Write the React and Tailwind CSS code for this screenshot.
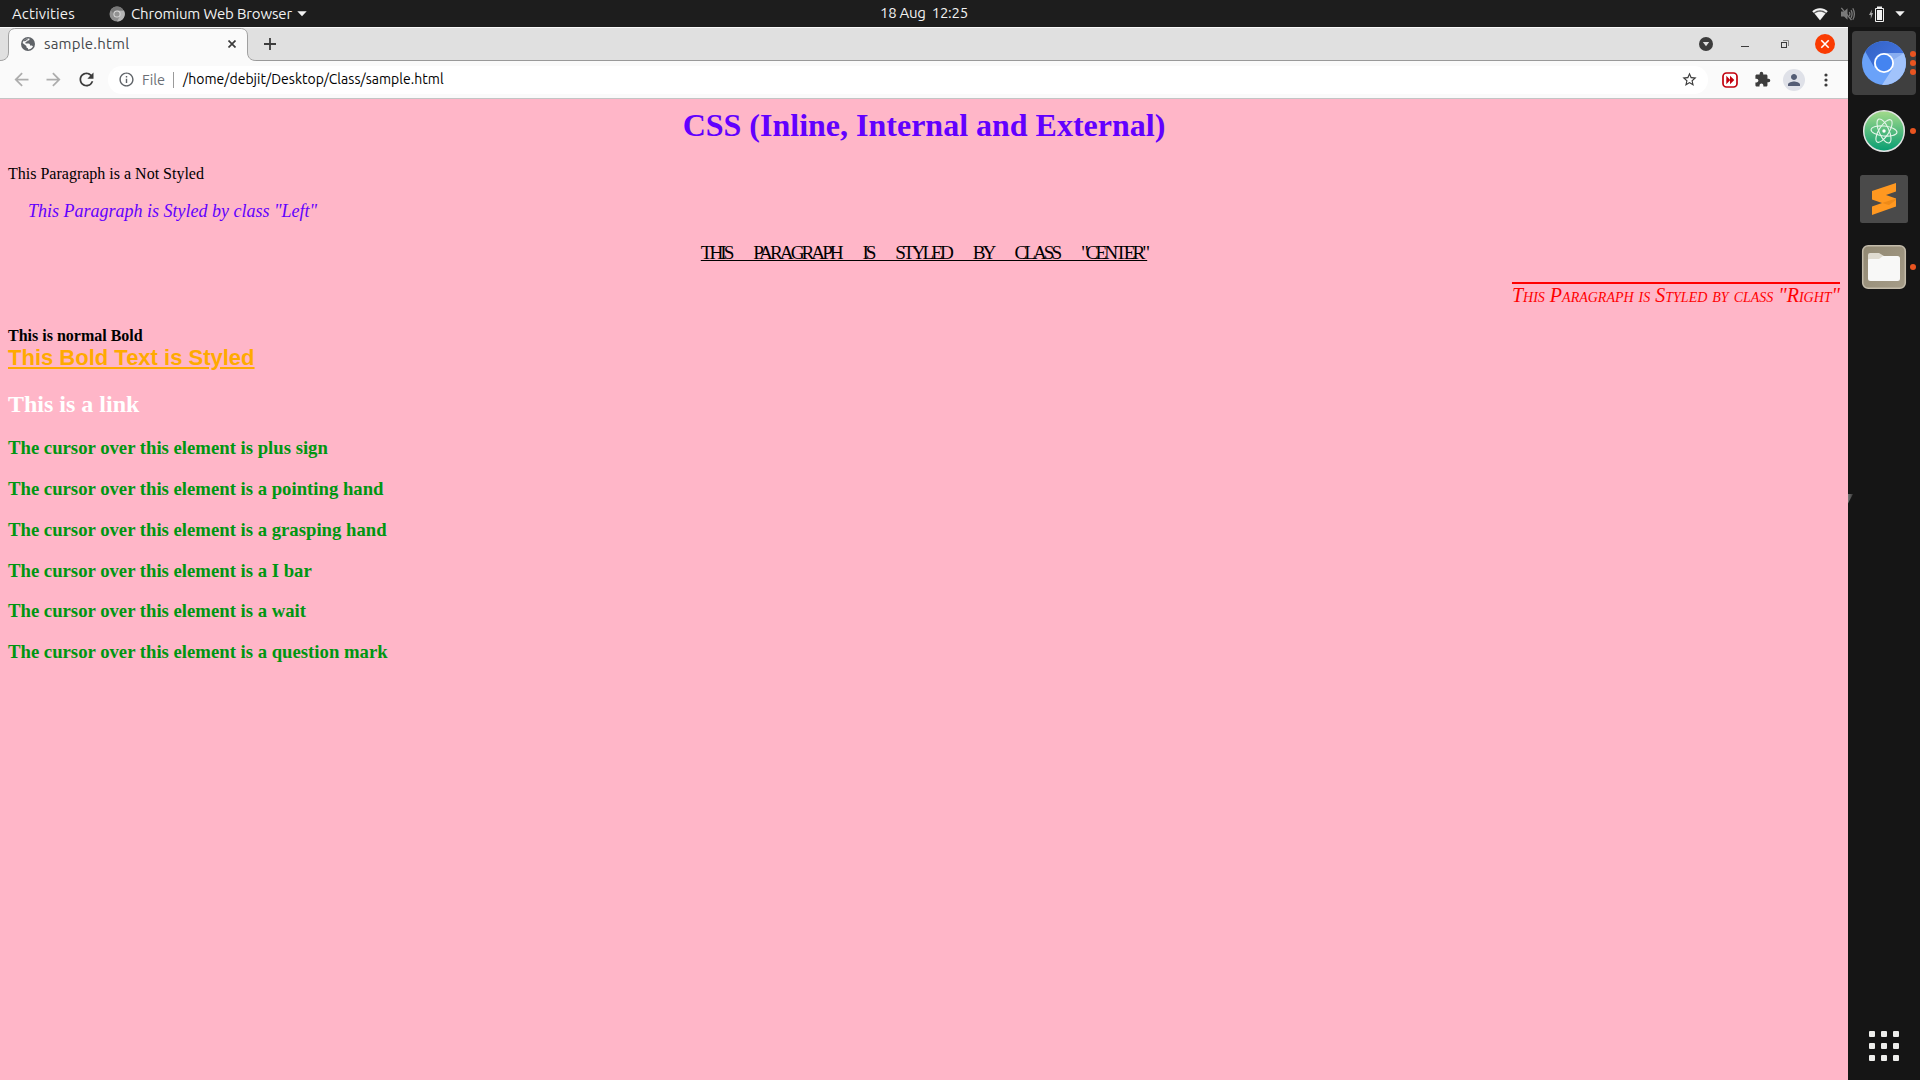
import React from "react";
import {
  MdArrowBack,
  MdArrowForward,
  MdExtension,
  MdInfoOutline,
  MdPerson,
  MdRefresh,
  MdStarBorder,
} from "react-icons/md";

function Caret() {
  return (
    <svg width="10" height="6" viewBox="0 0 10 6" className="block shrink-0">
      <path d="M0.300 0.300H9.700L5 5.300Z" fill="#f2f2f2" />
    </svg>
  );
}

function TopBar() {
  return (
    <header className="grid h-[27px] shrink-0 grid-cols-3 items-center bg-[#1d1d1d] text-[15px] leading-[27px] text-[#f2f2f2]">
      <div className="flex items-center whitespace-nowrap pl-3">
        <span className="w-[97px] tracking-[0.130px]">Activities</span>
        <svg width="16" height="16" viewBox="0 0 16 16" className="block">
          <circle cx="8" cy="8" r="7.500" fill="#8f8f8f" />
          <path d="M8 4.500H15A7.500 7.500 0 0 1 8 15.500L11 10Z" fill="#b5b5b5" />
          <path d="M1.600 4A7.500 7.500 0 0 1 14.600 4.500H8Q5 5 4.600 8Z" fill="#777" />
          <circle cx="8" cy="8" r="3.600" fill="#dadada" />
          <circle cx="8" cy="8" r="2.600" fill="#929292" />
        </svg>
        <span className="ml-[6px] w-[166px] tracking-[-0.150px]">Chromium Web Browser</span>
        <Caret />
      </div>
      <div className="whitespace-pre pb-[2px] pl-[240px] leading-[25px] tracking-[-0.300px]">18 Aug  12:25</div>
      <div className="flex items-center justify-end pr-[15px]">
        <svg width="16" height="14" viewBox="0 0 16 14" className="mr-[12px] block">
          <path d="M0.300 4.200C4.500 0.100 11.500 0.100 15.700 4.200L8 13.500Z" fill="#5a5a5a" />
          <path d="M0.300 4.200C4.500 0.100 11.500 0.100 15.700 4.200L14.300 5.800C10.500 2.500 5.500 2.500 1.700 5.800Z" fill="#f2f2f2" />
          <path d="M2.600 6.500C6 4 10 4 13.400 6.500L8 13.300Z" fill="#f2f2f2" />
        </svg>
        <svg width="16" height="14" viewBox="0 0 16 14" className="mr-[12px] block" fill="none" stroke="#7a7a7a" strokeWidth="1.300">
          <path d="M1 4.500H4L7.500 1.200V12.800L4 9.500H1Z" fill="#7a7a7a" stroke="none" />
          <path d="M9.300 5Q10.500 7 9.300 9M11 3.200Q13.200 7 11 10.800M12.800 1.300Q16 7 12.800 12.700" />
          <path d="M1.300 0.800L11.500 13" />
        </svg>
        <svg width="16" height="16" viewBox="0 0 16 16" className="mr-[11px] block">
          <path d="M4 3.500L1 9H2.800V13L5 7H3.500Z" fill="#a8a8a8" />
          <path d="M7.500 2.500H15.500V15.500H7.500Z" fill="none" stroke="#f2f2f2" />
          <rect x="9" y="0.500" width="5" height="2" fill="#f2f2f2" />
          <rect x="9" y="4" width="5" height="10" fill="#f2f2f2" />
        </svg>
        <Caret />
      </div>
    </header>
  );
}

function GlobeIcon() {
  return (
    <svg width="14" height="14" viewBox="0 0 14 14" className="relative block shrink-0">
      <circle cx="7" cy="7" r="7" fill="#5f6368" />
      <path
        d="M8.600 1.700C8.600 3 8 3.600 6.600 3.600C6.200 4.600 5.500 5 4.500 5.100V6.600H7.600C8.700 6.600 9 7.400 9 8.400H10.400C11.300 8.400 11.800 9 12 9.600C10.900 11.700 9 12.600 7 12.600V11.200C6 11.200 5.400 10.500 5.400 9.600V8.900L1.600 5.900C2.200 3.300 5 1 8.600 1.700Z"
        fill="#fafafa"
      />
      <path d="M2.600 4.200C3.600 2.300 5.500 1.500 7.400 1.600C7.200 2.600 6.500 2.600 5.600 2.800C5.500 3.800 4.600 4.100 3.600 4.200Z" fill="#5f6368" />
    </svg>
  );
}

function TabStrip() {
  return (
    <div className="flex h-[34px] items-center border-b border-t border-b-[#999999] border-t-[#fbfbfb] bg-[#e0e0e0]">
      <div className="relative flex h-[32px] w-[256px] items-center pl-[21px]">
        <svg width="256" height="34" viewBox="0 0 256 34" className="absolute left-0 top-[-1px]">
          <path
            d="M0 34V33.500C5.500 33.500 8.500 30.500 8.500 25V9C8.500 3.500 11.500 1.500 16 1.500H240C244.500 1.500 247.500 3.500 247.500 9V25C247.500 30.500 250.500 33.500 256 33.500V34Z"
            fill="#fafafa"
          />
          <path
            d="M0 33.500C5.500 33.500 8.500 30.500 8.500 25V9C8.500 3.500 11.500 1.500 16 1.500H240C244.500 1.500 247.500 3.500 247.500 9V25C247.500 30.500 250.500 33.500 256 33.500"
            fill="none"
            stroke="#a0a0a0"
          />
        </svg>
        <GlobeIcon />
        <span className="relative ml-[9px] w-[184px] text-[15px] tracking-[0.200px] text-[#45484c]">sample.html</span>
        <svg width="8" height="8" viewBox="0 0 8 8" className="relative block" stroke="#3c3c3c" strokeWidth="1.700">
          <path d="M0.500 0.500L7.500 7.500M7.500 0.500L0.500 7.500" />
        </svg>
      </div>
      <svg width="12" height="12" viewBox="0 0 12 12" className="ml-2 block" stroke="#3c3c3c" strokeWidth="1.800">
        <path d="M6 0V12M0 6H12" />
      </svg>
      <div className="ml-auto flex items-center pr-[13px]">
        <svg width="14" height="14" viewBox="0 0 14 14" className="mr-7 block">
          <circle cx="7" cy="7" r="7" fill="#3c3c3c" />
          <path d="M3.800 5H10.200L7 9.300Z" fill="#e0e0e0" />
        </svg>
        <svg width="8" height="8" viewBox="0 0 8 8" className="mr-8 block">
          <rect y="6" width="8" height="1" fill="#3c3c3c" />
        </svg>
        <svg width="8" height="8" viewBox="0 0 8 8" className="mr-[26px] block" fill="none">
          <path d="M2 0.500H7.500V6" stroke="#8a8a8a" />
          <rect x="0.500" y="2.500" width="5" height="5" stroke="#3c3c3c" />
        </svg>
        <svg width="20" height="20" viewBox="0 0 20 20" className="block">
          <circle cx="10" cy="10" r="10" fill="#fa3b02" />
          <path d="M6.300 6.300L13.700 13.700M13.700 6.300L6.300 13.700" stroke="#fff" strokeWidth="1.600" />
        </svg>
      </div>
    </div>
  );
}

function Toolbar() {
  return (
    <div className="flex h-[38px] items-center border-b border-[#c4c4c4] bg-[#fafafa] pl-[11px]">
      <MdArrowBack size={21} className="text-[#adadad]" />
      <MdArrowForward size={21} className="ml-[11px] text-[#adadad]" />
      <MdRefresh size={21} className="ml-[12px] text-[#3c3c3c]" />
      <div className="ml-[11px] flex h-7 w-[1600px] items-center rounded-full bg-white pl-[10px] pr-[10px]">
        <MdInfoOutline size={17} className="shrink-0 text-[#5f6368]" />
        <span className="ml-[7px] w-[31px] text-[14.500px] text-[#6b6f75]">File</span>
        <span className="h-4 w-px bg-[#9a9a9a]" />
        <span className="ml-[9px] whitespace-nowrap text-[14px] tracking-[0.030px] text-black">
          /home/debjit/Desktop/Class/sample.html
        </span>
        <MdStarBorder size={17} className="ml-auto text-[#3c3c3c]" />
      </div>
      <svg width="16" height="16" viewBox="0 0 16 16" className="ml-[14px] block">
        <rect x="1" y="1" width="14" height="14" rx="3.500" fill="#fff" stroke="#c2000d" strokeWidth="1.700" />
        <path d="M4.300 3.800L8.300 8L4.300 12.200ZM8 3.800L12.300 8L8 12.200Z" fill="#c2000d" />
      </svg>
      <MdExtension size={17} className="ml-[16px] text-[#3c3c3c]" />
      <span className="ml-[12px] flex h-[22px] w-[22px] items-center justify-center rounded-full bg-[#dfe1e8]">
        <MdPerson size={18} className="text-[#545d75]" />
      </span>
      <svg width="4" height="14" viewBox="0 0 4 14" className="ml-[19px] block" fill="#3c3c3c">
        <circle cx="2" cy="2" r="1.600" />
        <circle cx="2" cy="7" r="1.600" />
        <circle cx="2" cy="12" r="1.600" />
      </svg>
    </div>
  );
}

const CURSORS = [
  ["The cursor over this element is plus sign", "cursor-crosshair"],
  ["The cursor over this element is a pointing hand", "cursor-pointer"],
  ["The cursor over this element is a grasping hand", "cursor-grab"],
  ["The cursor over this element is a I bar", "cursor-text"],
  ["The cursor over this element is a wait", "cursor-wait"],
  ["The cursor over this element is a question mark", "cursor-help"],
];

function SamplePage() {
  return (
    <main className="flex-1 bg-[#ffb6c8] p-2 font-['Liberation_Serif',serif] text-[16px] leading-[normal] text-black">
      <h1 className="text-center text-[32px] font-bold text-[#6200ff]">CSS (Inline, Internal and External)</h1>
      <p className="mt-[21.440px]">This Paragraph is a Not Styled</p>
      <p className="mt-[18px] indent-[20px] text-[18px] italic text-[#6200ff]">
        This Paragraph is Styled by class "Left"
      </p>
      <p className="mt-[19.200px] text-center text-[19.200px] uppercase tracking-[-3px] underline [word-spacing:20px]">
        This Paragraph is Styled by class "Center"
      </p>
      <p className="mt-[20px] text-right text-[20px] italic text-[#ff0000] overline decoration-2 [font-variant:small-caps]">
        This Paragraph is Styled by class "Right"
      </p>
      <div className="mt-[20px]">
        <b>This is normal Bold</b>
        <br />
        <b className="font-['Liberation_Sans',sans-serif] text-[22px] text-[#ffaa00] underline">
          This Bold Text is Styled
        </b>
      </div>
      <h2 className="my-[19.920px] text-[24px] font-bold text-white">This is a link</h2>
      {CURSORS.map(([label, cursor]) => (
        <h3 key={label} className={"my-[18.720px] text-[18.720px] font-bold text-[#009611] " + cursor}>
          {label}
        </h3>
      ))}
    </main>
  );
}

function ChromiumIcon() {
  return (
    <svg width="44" height="44" viewBox="0 0 44 44" className="block">
      <defs>
        <clipPath id="disc">
          <circle cx="22" cy="22" r="22" />
        </clipPath>
        <linearGradient id="topBlue" x1="0" y1="0" x2="1" y2="0.600">
          <stop offset="0" stopColor="#3161c4" />
          <stop offset="1" stopColor="#4474de" />
        </linearGradient>
      </defs>
      <g clipPath="url(#disc)">
        <rect width="44" height="44" fill="#6aa2f9" />
        <path d="M0 6V0H44V12H22Q15 12 12.500 18L12 26L3.500 11Z" fill="url(#topBlue)" />
        <path d="M22 12H44V44H20L31 27Z" fill="#a1c3fb" />
        <path d="M22 12H42L31 19Z" fill="#88adf0" />
      </g>
      <circle cx="22" cy="22" r="10" fill="#fff" />
      <circle cx="22" cy="22" r="8.200" fill="#4484f0" />
    </svg>
  );
}

function AtomIcon() {
  return (
    <svg width="44" height="44" viewBox="0 0 44 44" className="block">
      <defs>
        <linearGradient id="atomGreen" x1="0" y1="0" x2="0" y2="1">
          <stop offset="0" stopColor="#a5db8b" />
          <stop offset="1" stopColor="#069d72" />
        </linearGradient>
      </defs>
      <circle cx="22" cy="22" r="20.300" fill="url(#atomGreen)" stroke="#e2e4e3" strokeWidth="1.500" />
      <g fill="none" stroke="#e4f5e9" strokeWidth="1.100">
        <ellipse cx="22" cy="22" rx="13" ry="5" transform="rotate(6 22 22)" />
        <ellipse cx="22" cy="22" rx="13" ry="5" transform="rotate(66 22 22)" />
        <ellipse cx="22" cy="22" rx="13" ry="5" transform="rotate(122 22 22)" />
      </g>
      <circle cx="22" cy="22" r="1.700" fill="#fff" />
    </svg>
  );
}

function SublimeIcon() {
  return (
    <svg width="48" height="48" viewBox="0 0 48 48" className="block">
      <rect width="48" height="48" rx="2.500" fill="#4a4a4a" />
      <path d="M12 16L36 8V16.500L26 20L36 23.500V31.500L12 40V31.500L22 28L12 24.500Z" fill="#ff9820" />
      <path d="M22 28L36 23.500V25L29 30Z" fill="#ee8a18" />
    </svg>
  );
}

function FilesIcon() {
  return (
    <svg width="46" height="46" viewBox="0 0 46 46" className="block">
      <defs>
        <linearGradient id="filesBack" x1="0" y1="0" x2="1" y2="1">
          <stop offset="0" stopColor="#918872" />
          <stop offset="1" stopColor="#a59c88" />
        </linearGradient>
      </defs>
      <rect x="1.700" y="1.700" width="42.600" height="42.600" rx="5.500" fill="url(#filesBack)" stroke="#c3bbaa" strokeWidth="1.500" />
      <path d="M7 20V11Q7 9 9 9H18L23 12H34V20Z" fill="#dfdbd0" />
      <path d="M7 16Q7 15 8.500 15H18L22 12H36.500Q39 12 39 14.500V34.500Q39 37 36.500 37H9.500Q7 37 7 34.500Z" fill="#f8f8f7" />
    </svg>
  );
}

const APPS = [
  { name: "Chromium", Icon: ChromiumIcon, windows: 3, active: true },
  { name: "Atom", Icon: AtomIcon, windows: 1 },
  { name: "Sublime", Icon: SublimeIcon, windows: 0 },
  { name: "Files", Icon: FilesIcon, windows: 1 },
];

function Dock() {
  return (
    <aside className="relative flex w-[72px] shrink-0 flex-col items-center gap-1 bg-[#151515] py-1">
      {APPS.map(({ name, Icon, windows, active }) => (
        <div
          key={name}
          className={
            active
              ? "relative flex h-16 w-16 items-center justify-center rounded bg-[#3f3f3f]"
              : "relative flex h-16 w-16 items-center justify-center"
          }
        >
          <Icon />
          <div className="absolute inset-y-0 right-0 flex flex-col items-center justify-center gap-[3px]">
            {Array.from({ length: windows }, (_, i) => (
              <span key={i} className="h-[6px] w-[6px] rounded-full bg-[#e95420]" />
            ))}
          </div>
        </div>
      ))}
      <svg width="6" height="10" viewBox="0 0 6 10" className="absolute left-0 top-[467px]">
        <defs>
          <linearGradient id="edge" x1="0" y1="0" x2="1" y2="0">
            <stop offset="0" stopColor="#777" />
            <stop offset="1" stopColor="#333" />
          </linearGradient>
        </defs>
        <path d="M0 0H5L0 9.500Z" fill="url(#edge)" />
      </svg>
      <div className="mb-[15px] mt-auto grid grid-cols-3 gap-[6px]">
        {Array.from({ length: 9 }, (_, i) => (
          <span key={i} className="h-[6px] w-[6px] rounded-[1px] bg-[#eeeeec]" />
        ))}
      </div>
    </aside>
  );
}

export default function App() {
  return (
    <div className="flex h-screen w-screen flex-col overflow-hidden font-['Ubuntu','Noto_Sans',sans-serif]">
      <TopBar />
      <div className="flex min-h-0 flex-1">
        <div className="flex min-w-0 flex-1 flex-col">
          <TabStrip />
          <Toolbar />
          <SamplePage />
        </div>
        <Dock />
      </div>
    </div>
  );
}
